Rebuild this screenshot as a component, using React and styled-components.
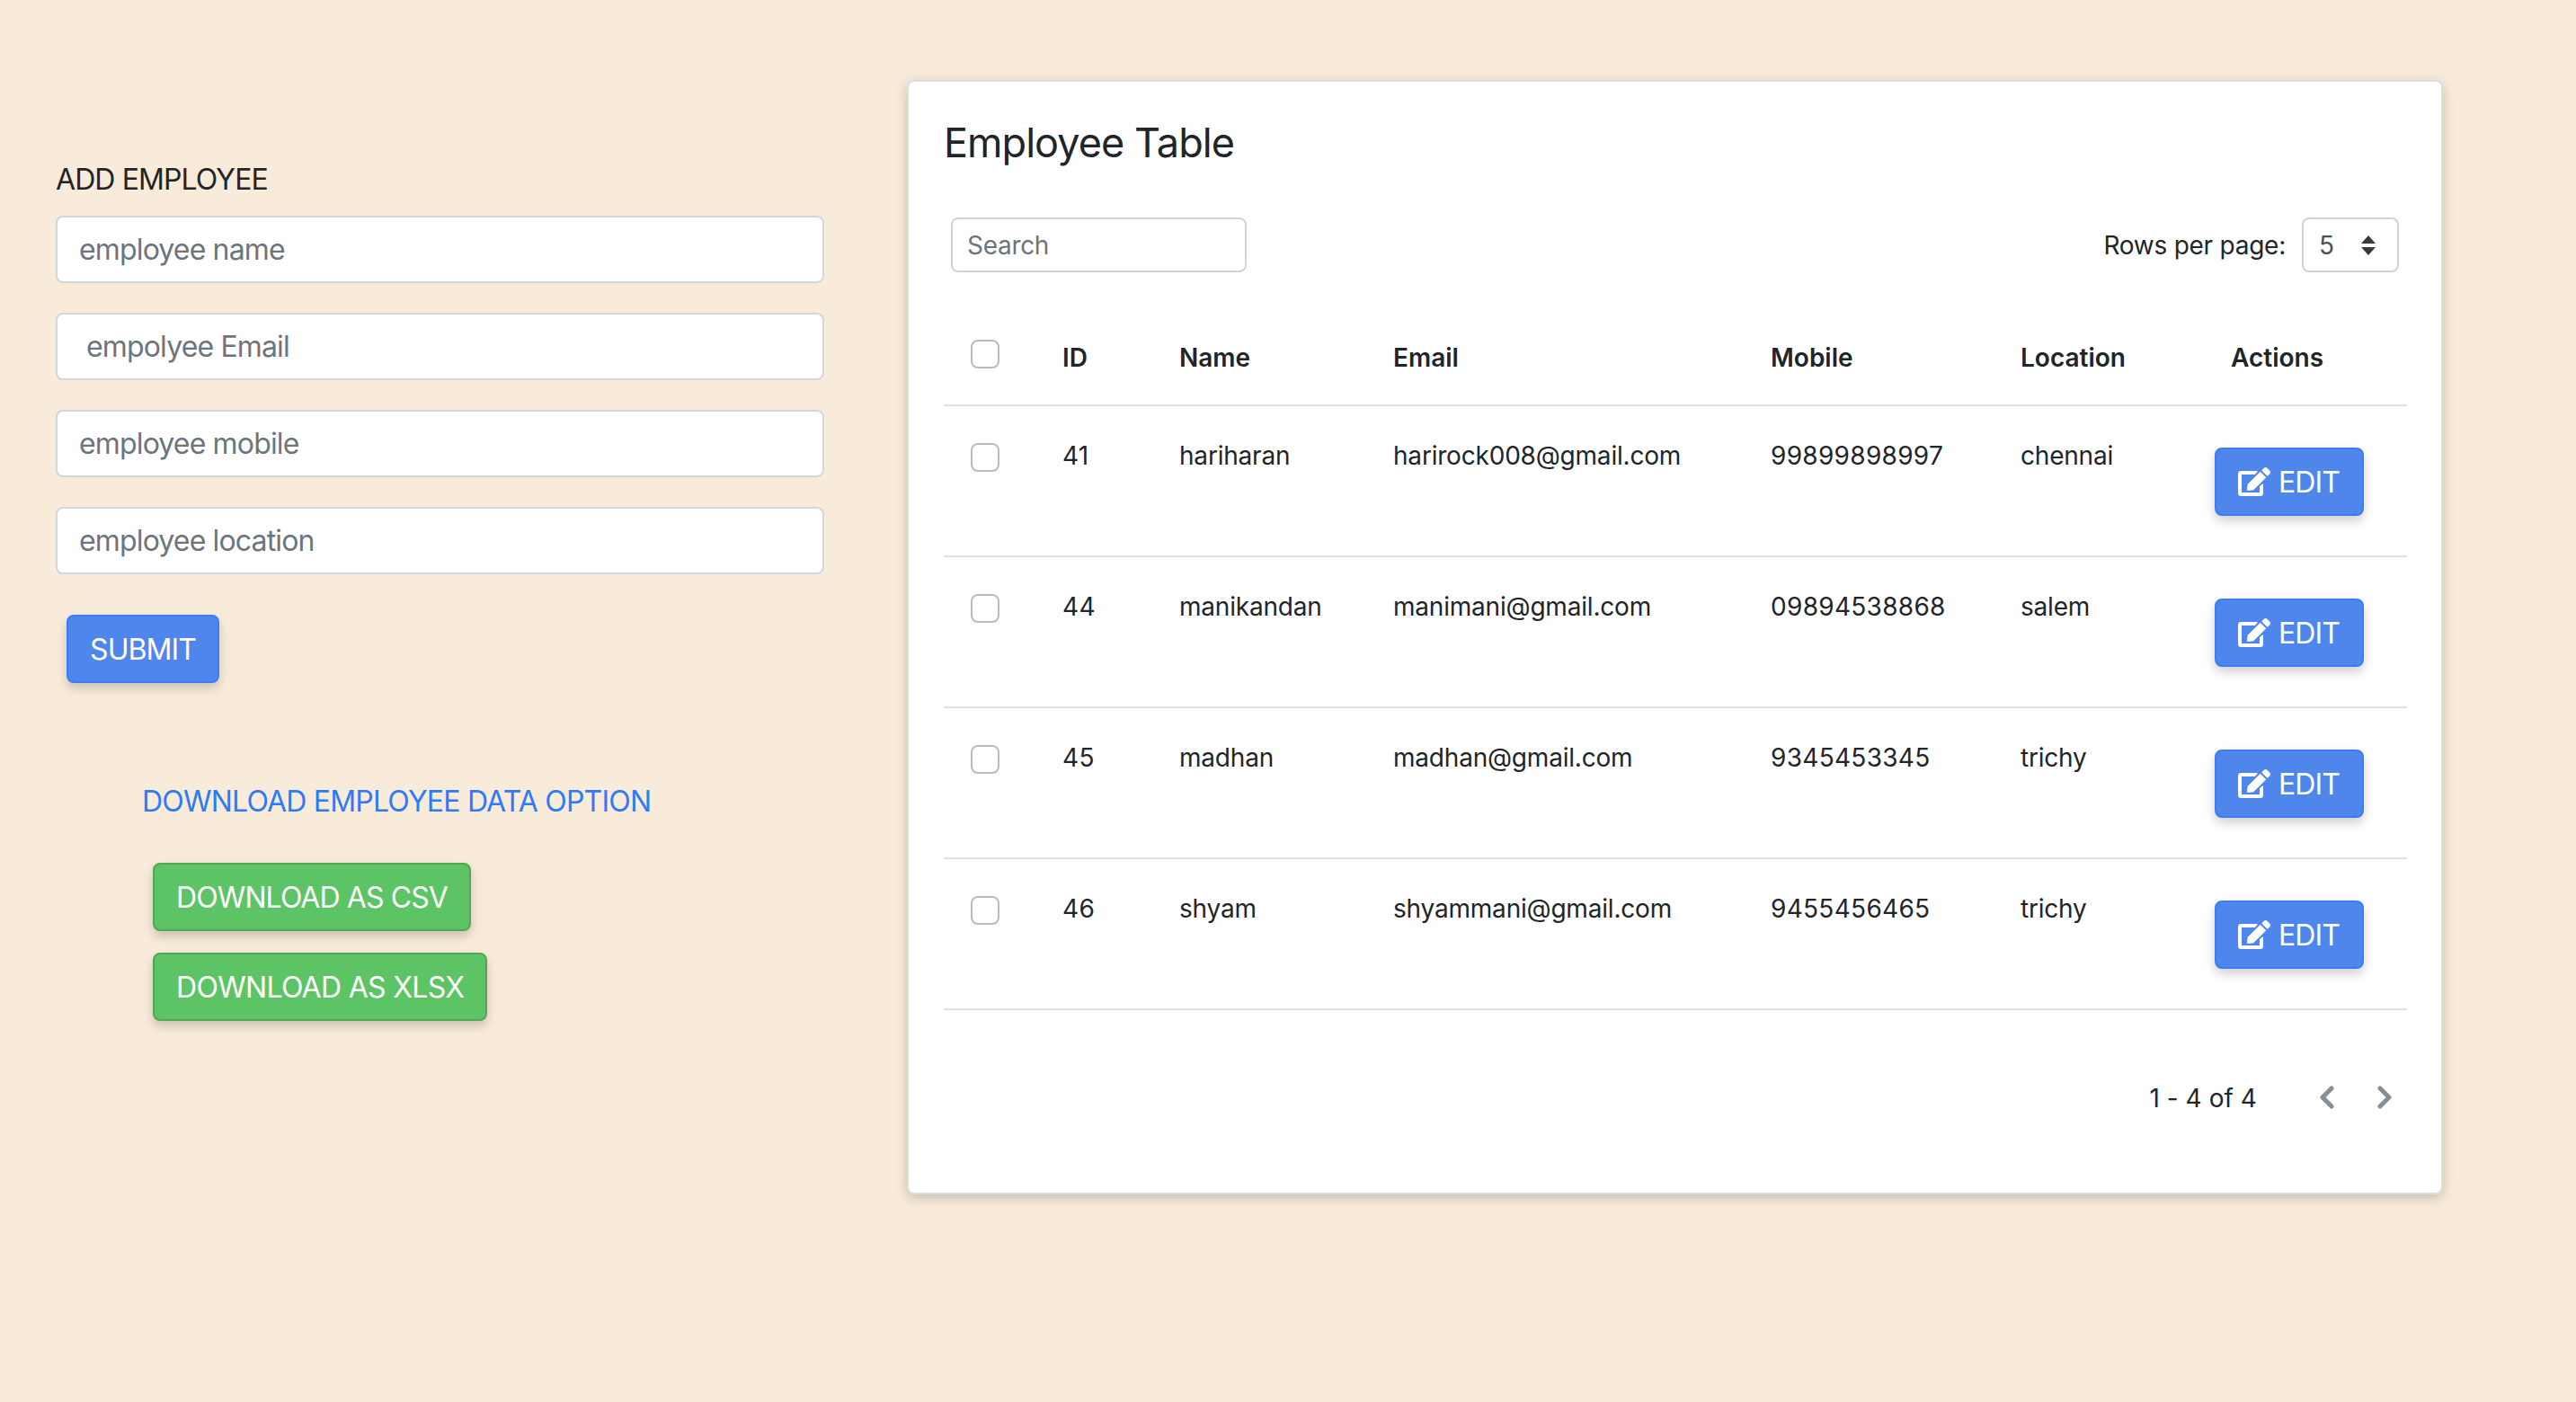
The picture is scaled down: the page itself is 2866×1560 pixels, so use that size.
import React from "react"
import styled, { createGlobalStyle } from "styled-components"
import { FaEdit } from "react-icons/fa"

const GlobalStyle = createGlobalStyle`
html, body {
  margin: 0;
  height: 100%;
}

body {
  font-family: Inter, "Liberation Sans", sans-serif;
  background: #f8ebd9;
  color: #212529;
}

* {
  box-sizing: border-box;
}
`
const Page = styled.div`
  display: flex;
  align-items: flex-start;
  min-height: 1560px;
  padding: 89px 148px 0 62px;
  gap: 92px;
`
const FormColumn = styled.section`
  width: 855px;
  flex: none;
  padding-top: 91px;
`
const FormTitle = styled.h5`
  margin: 0 0 20px;
  font-size: 32px;
  line-height: 40px;
  font-weight: 400;
  letter-spacing: -0.9px;
`
const TextField = styled.input`
  display: block;
  width: 100%;
  height: 75px;
  margin-bottom: 33px;
  padding: 0 ${(p) => (p.$wide ? "32px" : "24px")};
  background: #fff;
  border: 2px solid #d3d6da;
  border-radius: 8px;
  font: 400 32px Inter, sans-serif;
  letter-spacing: -0.85px;

  &::placeholder {
    color: #6c757d;
    opacity: 1;
  }
`
const Button = styled.button`
  display: inline-flex;
  align-items: center;
  gap: 8px;
  height: 76px;
  padding: 0 24px;
  color: #fff;
  background: ${(p) => (p.$green ? "#5cc465" : "#4f86ec")};
  border: 2px solid ${(p) => (p.$green ? "#53a653" : "#3b7df5")};
  border-radius: 8px;
  box-shadow: 0 6px 12px rgba(0, 0, 0, 0.18);
  font: 400 32px Inter, sans-serif;
  letter-spacing: ${(p) => p.$spacing || "-0.9px"};
`
const SubmitButton = styled(Button)`
  margin: 12px 0 0 12px;
`
const DownloadSection = styled.div`
  display: flex;
  flex-direction: column;
  align-items: flex-start;
  gap: 24px;
  margin: 0 0 0 108px;
  padding-top: 112px;
`
const DownloadTitle = styled.h5`
  margin: 0 0 24px -12px;
  font-size: 32px;
  line-height: 40px;
  font-weight: 400;
  letter-spacing: -0.8px;
  color: #2f7bf6;
`
const Card = styled.section`
  width: 1709px;
  height: 1240px;
  flex: none;
  padding: 0 39px;
  background: #fff;
  border: 2px solid #dcdee0;
  border-radius: 8px;
  box-shadow: 0 4px 14px rgba(0, 0, 0, 0.2);
`
const CardTitle = styled.h1`
  margin: 0;
  padding-top: 38px;
  font-size: 45px;
  line-height: 60px;
  font-weight: 400;
  letter-spacing: -0.95px;
`
const Toolbar = styled.div`
  display: flex;
  align-items: center;
  justify-content: space-between;
  margin-top: 53px;
  padding: 0 8px 0 8px;
`
const SearchField = styled.input`
  width: 329px;
  height: 61px;
  padding: 0 16px;
  border: 2px solid #ced4da;
  border-radius: 8px;
  font: 400 28px Inter, sans-serif;
  letter-spacing: -0.3px;

  &::placeholder {
    color: #6c757d;
    opacity: 1;
  }
`
const RowsControl = styled.div`
  display: flex;
  align-items: center;
  gap: 18px;
  font-size: 28px;
  letter-spacing: -0.25px;
`
const RowsSelect = styled.div`
  display: flex;
  align-items: center;
  justify-content: space-between;
  width: 108px;
  height: 61px;
  padding: 0 24px 0 17px;
  border: 2px solid #ced4da;
  border-radius: 8px;
  color: #495057;
`
const Table = styled.table`
  width: 1628px;
  margin-top: 35px;
  border-collapse: collapse;
  table-layout: fixed;
  font-size: 28px;
`
const HeadCell = styled.th`
  height: 113px;
  padding: 7px 0 0 ${(p) => p.$pad || 0}px;
  text-align: left;
  font-weight: 600;
  letter-spacing: 0;
  border-bottom: 2px solid #dee2e6;
`
const HeadCheckCell = styled(HeadCell)`
  padding-top: 0;
`
const Cell = styled.td`
  height: 168px;
  padding: 37px 0 0;
  vertical-align: top;
  letter-spacing: ${(p) => (p.$digits ? "0.3px" : "-0.2px")};
  line-height: 36px;
  border-bottom: 2px solid #dee2e6;
`
const CheckCell = styled(Cell)`
  padding-top: 41px;
`
const ActionCell = styled(Cell)`
  padding-top: 46px;
`
const Check = styled.input.attrs({ type: "checkbox" })`
  appearance: none;
  display: block;
  width: 32px;
  height: 32px;
  margin: 0 0 0 30px;
  background: #fff;
  border: 2px solid #b5bcc6;
  border-radius: 8px;
`
const EditButton = styled(Button)`
  width: 166px;
  gap: 9px;

  svg {
    flex: none;
  }
`
const Pager = styled.div`
  display: flex;
  align-items: center;
  justify-content: flex-end;
  margin-top: 79px;
  padding-right: 16px;
  font-size: 28px;
`
const PagerLabel = styled.span`
  margin: 2px 70px 0 0;
  letter-spacing: 0.05px;
`
const PagerIcon = styled.svg`
  width: 16px;
  height: 26px;
  margin-left: ${(p) => p.$gap || 0}px;
  fill: none;
  stroke: #868e96;
  stroke-width: 5;
  stroke-linecap: round;
  stroke-linejoin: round;
`

const employees = [
  { id: 41, name: "hariharan", email: "harirock008@gmail.com", mobile: "99899898997", location: "chennai" },
  { id: 44, name: "manikandan", email: "manimani@gmail.com", mobile: "09894538868", location: "salem" },
  { id: 45, name: "madhan", email: "madhan@gmail.com", mobile: "9345453345", location: "trichy" },
  { id: 46, name: "shyam", email: "shyammani@gmail.com", mobile: "9455456465", location: "trichy" },
]

function App() {
  return (
    <Page>
      <GlobalStyle />
      <FormColumn>
        <FormTitle>ADD EMPLOYEE</FormTitle>
        <TextField placeholder="employee name" />
        <TextField $wide placeholder="empolyee Email" />
        <TextField placeholder="employee mobile" />
        <TextField placeholder="employee location" />
        <SubmitButton>SUBMIT</SubmitButton>
        <DownloadSection>
          <DownloadTitle>DOWNLOAD EMPLOYEE DATA OPTION</DownloadTitle>
          <Button $green>DOWNLOAD AS CSV</Button>
          <Button $green $spacing="-0.7px">DOWNLOAD AS XLSX</Button>
        </DownloadSection>
      </FormColumn>

      <Card>
        <CardTitle>Employee Table</CardTitle>
        <Toolbar>
          <SearchField placeholder="Search" />
          <RowsControl>
            Rows per page:
            <RowsSelect>
              5
              <svg width="16" height="22" viewBox="0 0 16 22" fill="#343a40">
                <path d="M8 0 16 9H0zM0 13h16l-8 9z" />
              </svg>
            </RowsSelect>
          </RowsControl>
        </Toolbar>

        <Table>
          <colgroup>
            <col style={{ width: 132 }} />
            <col style={{ width: 130 }} />
            <col style={{ width: 238 }} />
            <col style={{ width: 420 }} />
            <col style={{ width: 278 }} />
            <col style={{ width: 216 }} />
            <col />
          </colgroup>
          <thead>
            <tr>
              <HeadCheckCell><Check /></HeadCheckCell>
              <HeadCell>ID</HeadCell>
              <HeadCell>Name</HeadCell>
              <HeadCell>Email</HeadCell>
              <HeadCell>Mobile</HeadCell>
              <HeadCell>Location</HeadCell>
              <HeadCell $pad={18}>Actions</HeadCell>
            </tr>
          </thead>
          <tbody>
            {employees.map((e) => (
              <tr key={e.id}>
                <CheckCell><Check /></CheckCell>
                <Cell $digits>{e.id}</Cell>
                <Cell>{e.name}</Cell>
                <Cell>{e.email}</Cell>
                <Cell $digits>{e.mobile}</Cell>
                <Cell>{e.location}</Cell>
                <ActionCell>
                  <EditButton>
                    <FaEdit size={36} />
                    EDIT
                  </EditButton>
                </ActionCell>
              </tr>
            ))}
          </tbody>
        </Table>

        <Pager>
          <PagerLabel>1 - 4 of 4</PagerLabel>
          <PagerIcon viewBox="0 0 16 26"><path d="M13 3 3 13l10 10" /></PagerIcon>
          <PagerIcon $gap={48} viewBox="0 0 16 26"><path d="m3 3 10 10L3 23" /></PagerIcon>
        </Pager>
      </Card>
    </Page>
  )
}

export default App
